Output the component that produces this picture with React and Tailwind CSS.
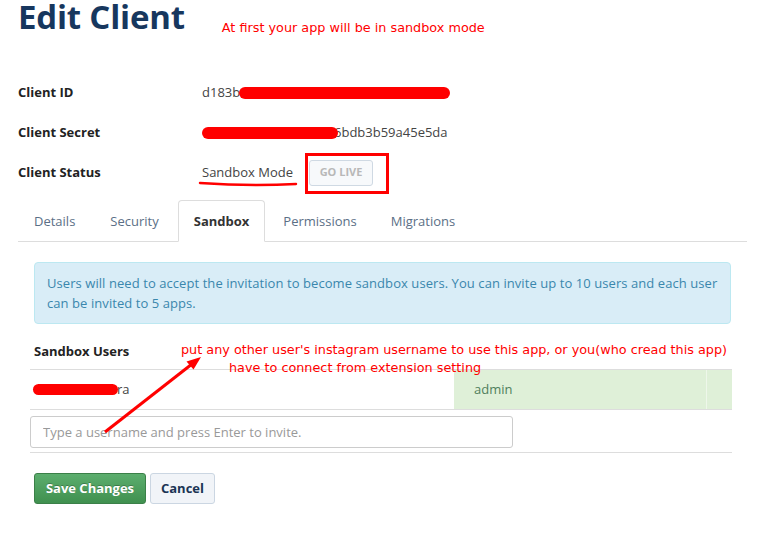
export default function App() {
  const tabs = ["Details", "Security", "Sandbox", "Permissions", "Migrations"];
  return (
    <div className="relative w-[757px] h-[547px] overflow-hidden bg-white font-['Open_Sans',sans-serif] text-[13px] text-[#333]">
      {/* Title */}
      <div className="flex h-[32px] items-start pl-[18px]">
        <h1 className="font-['Open_Sans',sans-serif] font-bold text-[33px] leading-[34px] text-[#17375e] tracking-[-0.2px]">
          Edit Client
        </h1>
        <span className="ml-[37px] mt-[21px] whitespace-nowrap font-['DejaVu_Sans',sans-serif] text-[12.8px] leading-[14px] text-[#ff0000]">
          At first your app will be in sandbox mode
        </span>
      </div>

      {/* Client info rows */}
      <div className="mt-[41px] pl-[18px]">
        <div className="flex items-center h-10">
          <div className="w-[184px] font-bold text-[#222]">Client ID</div>
          <div className="flex items-center text-[#444]">
            <span>d183b</span>
            <span className="inline-block w-[211px] h-[12px] rounded-full bg-[#ff0000] -ml-px" />
          </div>
        </div>
        <div className="flex items-center h-10">
          <div className="w-[184px] font-bold text-[#222]">Client Secret</div>
          <div className="flex items-center text-[#444]">
            <span className="relative z-10 inline-block w-[136px] h-[12px] rounded-full bg-[#ff0000]" />
            <span className="-ml-[4px]">6bdb3b59a45e5da</span>
          </div>
        </div>
        <div className="flex items-center h-10">
          <div className="w-[184px] font-bold text-[#222]">Client Status</div>
          <div className="flex items-center text-[#444]">
            <span className="w-[103px]">Sandbox Mode</span>
            <div className="border-[3px] border-[#ff0000] pl-px pr-[13px] pt-[4px] pb-[5px]">
              <div className="flex items-center justify-center h-[26px] w-[64px] rounded-[3px] border border-[#cfd9e3] bg-[#f7f9fb] text-[11px] font-bold text-[#b8b8b8]">
                GO LIVE
              </div>
            </div>
          </div>
        </div>
      </div>

      {/* Tabs */}
      <ul className="mt-[7px] ml-[18px] mr-[10px] flex border-b border-[#ddd]">
        {tabs.map((t, i) =>
          t === "Sandbox" ? (
            <li key={t} className="-mb-px mr-[2px]">
              <span className="block px-[15px] py-[10px] leading-[20px] border border-[#ddd] border-b-white bg-white rounded-t-[4px] font-bold text-[#333]">
                {t}
              </span>
            </li>
          ) : (
            <li key={t} className={i < 2 ? "-mb-px mr-[3px]" : "-mb-px mr-[2px]"}>
              <span className="block px-[15px] py-[10px] leading-[20px] border border-transparent text-[#5b6f86]">
                {t}
              </span>
            </li>
          )
        )}
      </ul>

      {/* Tab content */}
      <div className="ml-[18px] mr-[10px] px-4 pt-5">
        <div className="rounded-[4px] border border-[#bce8f1] bg-[#d9edf7] px-[12px] py-[10px] leading-[20px] tracking-[0.07px] text-[#3a87ad]">
          <span className="whitespace-nowrap">
            Users will need to accept the invitation to become sandbox users. You can invite up to 10 users and each user
          </span>
          <br />
          can be invited to 5 apps.
        </div>

        <div className="mt-[17px] mb-[8px] leading-[20px] font-bold text-[#222]">Sandbox Users</div>

        <div className="-ml-[4px] -mr-px border-t border-[#ddd]">
          <div className="flex h-[40px] border-b border-[#ddd]">
            <div className="flex flex-1 items-center pl-[3px] text-[#444]">
              <span className="relative z-10 inline-block w-[85px] h-[11px] rounded-full bg-[#ff0000]" />
              <span className="-ml-px">ra</span>
            </div>
            <div className="flex w-[252px] items-center bg-[#dff0d8] pl-[20px] text-[#4f7f5c]">admin</div>
            <div className="w-[26px] bg-[#dff0d8] border-l border-[#eef7ea]" />
          </div>
          <div className="pt-[6px] pb-[4px] border-b border-[#ddd]">
            <input
              className="block h-[32px] w-[483px] rounded-[3px] border border-[#ccc] px-[12px] text-[13px] outline-none placeholder:text-[#999]"
              placeholder="Type a username and press Enter to invite."
            />
          </div>
        </div>

        <div className="mt-[20px] flex">
          <button className="h-[31px] w-[112px] rounded-[3px] border border-[#3b8048] bg-gradient-to-b from-[#5cae6e] to-[#40904f] font-bold text-white [text-shadow:0_-1px_0_rgba(0,0,0,0.25)]">
            Save Changes
          </button>
          <button className="ml-[4px] h-[31px] w-[65px] rounded-[3px] border border-[#cbd6e2] bg-[#f1f4f8] font-bold text-[#1b3454]">
            Cancel
          </button>
        </div>
      </div>

      {/* Annotations (overlay) */}
      <span className="absolute left-[181px] top-[343px] whitespace-nowrap font-['DejaVu_Sans',sans-serif] text-[12.8px] leading-[14px] text-[#ff0000]">
        put any other user's instagram username to use this app, or you(who cread this app)
      </span>
      <span className="absolute left-[229px] top-[361px] whitespace-nowrap font-['DejaVu_Sans',sans-serif] text-[12.8px] leading-[14px] text-[#ff0000]">
        have to connect from extension setting
      </span>
      <svg className="absolute left-0 top-0 pointer-events-none" width="757" height="547">
        <path d="M200 183 Q 250 186.5 296 184" stroke="#ff0000" strokeWidth="2.5" fill="none" strokeLinecap="round" />
        <line x1="105" y1="432" x2="192" y2="364" stroke="#ff0000" strokeWidth="3" />
        <polygon points="201,357 193.5,369.5 186.5,361.5" fill="#ff0000" />
      </svg>
    </div>
  );
}
